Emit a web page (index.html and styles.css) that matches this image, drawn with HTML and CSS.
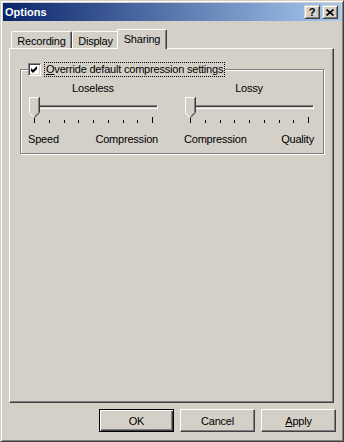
FILE: index.html
```html
<!DOCTYPE html>
<html lang="en">
<head>
  <meta charset="UTF-8" />
  <title>Options</title>
  <link rel="stylesheet" href="styles.css">
</head>
<body>

  <div class="window">
    <!-- Title bar -->
    <div class="titlebar">
      <span class="title">Options</span>
      <div class="caption-buttons">
        <span class="cap-btn help">?</span>
        <span class="cap-btn close">
          <svg width="8" height="7" viewBox="0 0 8 7"><path d="M0.5 0.5 L7.5 6.5 M7.5 0.5 L0.5 6.5" stroke="#000" stroke-width="1.6" fill="none"/></svg>
        </span>
      </div>
    </div>

    <div class="client">
      <!-- Tabs -->
      <div class="tabs">
        <span class="tab tab-recording">Recording</span>
        <span class="tab tab-display">Display</span>
        <span class="tab tab-sharing active">Sharing</span>
      </div>

      <div class="panel">
        <fieldset class="group">
          <legend>
            <span class="checkbox">
              <svg width="9" height="9" viewBox="0 0 9 9"><path d="M1 3 L3 5 L7 1 L7 4 L3 8 L1 6 Z" fill="#000"/></svg>
            </span>
            <span class="focus-label"><u>O</u>verride default compression settings</span>
          </legend>

          <div class="sliders">
            <div class="slider">
              <div class="slider-title">Loseless</div>
              <div class="track-area">
                <div class="track"></div>
                <svg class="thumb" width="11" height="21" viewBox="0 0 11 21">
                  <path d="M0 0 H11 V16 L5.5 21 L0 16 Z" fill="#d4d0c8"/>
                  <path d="M0.5 15.5 V0.5 H10" stroke="#fff" fill="none"/>
                  <path d="M0.5 16 L5 20.5" stroke="#fff" fill="none"/>
                  <path d="M10.5 0 V15.7 L5.5 20.7" stroke="#404040" fill="none"/>
                  <path d="M9.5 1 V15.3 L5.5 19.3" stroke="#808080" fill="none"/>
                </svg>
              </div>
              <div class="ticks">
                <i class="end"></i><i></i><i></i><i></i><i></i><i></i><i></i><i></i><i class="end"></i>
              </div>
              <div class="ends"><span>Speed</span><span>Compression</span></div>
            </div>

            <div class="slider">
              <div class="slider-title">Lossy</div>
              <div class="track-area">
                <div class="track"></div>
                <svg class="thumb" width="11" height="21" viewBox="0 0 11 21">
                  <path d="M0 0 H11 V16 L5.5 21 L0 16 Z" fill="#d4d0c8"/>
                  <path d="M0.5 15.5 V0.5 H10" stroke="#fff" fill="none"/>
                  <path d="M0.5 16 L5 20.5" stroke="#fff" fill="none"/>
                  <path d="M10.5 0 V15.7 L5.5 20.7" stroke="#404040" fill="none"/>
                  <path d="M9.5 1 V15.3 L5.5 19.3" stroke="#808080" fill="none"/>
                </svg>
              </div>
              <div class="ticks">
                <i class="end"></i><i></i><i></i><i></i><i></i><i></i><i></i><i></i><i class="end"></i>
              </div>
              <div class="ends"><span>Compression</span><span>Quality</span></div>
            </div>
          </div>
        </fieldset>
      </div>

      <!-- Dialog buttons -->
      <div class="buttons">
        <button class="btn default">OK</button>
        <button class="btn">Cancel</button>
        <button class="btn"><u>A</u>pply</button>
      </div>
    </div>
  </div>

</body>
</html>
```

FILE: styles.css
```css
body {
  margin: 0;
  background: #d4d0c8;
  font-family: "Liberation Sans", Arial, sans-serif;
  font-size: 11px;
  letter-spacing: -0.2px;
  color: #000;
}

/* Window frame */
.window {
  width: 344px;
  height: 442px;
  box-sizing: border-box;
  border: 1px solid;
  border-color: #d4d0c8 #404040 #404040 #d4d0c8;
  box-shadow: inset 1px 1px #fff, inset -1px -1px #808080;
  padding: 2px;
  background: #d4d0c8;
  display: flex;
  flex-direction: column;
}

/* Title bar */
.titlebar {
  height: 18px;
  display: flex;
  align-items: center;
  justify-content: space-between;
  padding: 0 3px 0 2px;
  background: linear-gradient(to right, #0a246a, #a6caf0);
  color: #fff;
}
.title {
  font-weight: bold;
  letter-spacing: 0;
}
.caption-buttons {
  display: flex;
  gap: 2px;
}
.cap-btn {
  width: 16px;
  height: 14px;
  box-sizing: border-box;
  display: flex;
  align-items: center;
  justify-content: center;
  background: #d4d0c8;
  border: 1px solid;
  border-color: #d4d0c8 #404040 #404040 #d4d0c8;
  box-shadow: inset 1px 1px #fff, inset -1px -1px #808080;
  color: #000;
}
.help {
  font-weight: bold;
  font-size: 11px;
  line-height: 12px;
}

/* Client area */
.client {
  flex: 1;
  display: flex;
  flex-direction: column;
  padding: 8px 7px 7px 6px;
}

/* Tabs */
.tabs {
  height: 19px;
  display: flex;
  align-items: flex-end;
  padding-left: 2px;
}
.tab {
  height: 17px;
  box-sizing: border-box;
  display: flex;
  align-items: center;
  justify-content: center;
  border: 1px solid #fff;
  border-right-color: #404040;
  border-bottom: none;
  border-radius: 2px 2px 0 0;
  box-shadow: inset -1px 0 #808080;
  padding-top: 1px;
}
.tab-recording { width: 61px; }
.tab-display { width: 47px; }
.tab-sharing { width: 50px; }
.tab.active {
  height: 20px;
  margin-left: -2px;
  margin-bottom: -1px;
  background: #d4d0c8;
  position: relative;
  z-index: 1;
  padding-top: 0;
  padding-bottom: 2px;
}

/* Tab page */
.panel {
  flex: 1;
  border: 1px solid;
  border-color: #fff #404040 #404040 #fff;
  box-shadow: inset -1px -1px #808080;
  padding: 12px 9px 0 10px;
}

/* Group box with checkbox caption */
.group {
  margin: 0;
  padding: 5px 9px 7px 7px;
  border: 1px solid #808080;
  box-shadow: inset 1px 1px #fff, 1px 1px #fff;
  min-width: 0;
}
.group legend {
  display: flex;
  align-items: center;
  gap: 3px;
  height: 16px;
  padding: 0;
  margin-left: 0;
  background: #d4d0c8;
}
.checkbox {
  width: 13px;
  height: 13px;
  box-sizing: border-box;
  display: flex;
  align-items: center;
  justify-content: center;
  background: #fff;
  border: 1px solid;
  border-color: #808080 #fff #fff #808080;
  box-shadow: inset 1px 1px #404040, inset -1px -1px #d4d0c8;
}
.focus-label {
  border: 1px dotted #000;
  padding: 0 1px;
  line-height: 13px;
}

/* Sliders */
.sliders {
  display: flex;
  gap: 26px;
}
.slider {
  width: 130px;
}
.slider-title {
  text-align: center;
  line-height: 13px;
  margin-bottom: 2px;
}
.track-area {
  position: relative;
  height: 20px;
  box-sizing: border-box;
  padding: 8px 0 0 3px;
}
.track {
  height: 4px;
  box-sizing: border-box;
  border: 1px solid;
  border-color: #808080 #fff #fff #808080;
  box-shadow: inset 1px 1px #404040;
}
.thumb {
  position: absolute;
  left: 1px;
  top: 0;
}
.ticks {
  height: 6px;
  display: flex;
  align-items: flex-end;
  justify-content: space-between;
  margin: 0 5px 0 6px;
}
.ticks i {
  width: 1px;
  height: 3px;
  background: #000;
}
.ticks i.end {
  height: 6px;
}
.ends {
  display: flex;
  justify-content: space-between;
  line-height: 13px;
  margin-top: 10px;
}

/* Dialog buttons */
.buttons {
  display: flex;
  justify-content: flex-end;
  gap: 6px;
  margin: 6px -2px 0 0;
}
.btn {
  width: 75px;
  height: 23px;
  font: inherit;
  letter-spacing: inherit;
  color: #000;
  background: #d4d0c8;
  border: 1px solid;
  border-color: #fff #404040 #404040 #fff;
  box-shadow: inset -1px -1px #808080;
  padding: 0;
}
.btn.default {
  border-color: #000;
  box-shadow: inset 1px 1px #fff, inset -1px -1px #404040, inset -2px -2px #808080;
}
```
